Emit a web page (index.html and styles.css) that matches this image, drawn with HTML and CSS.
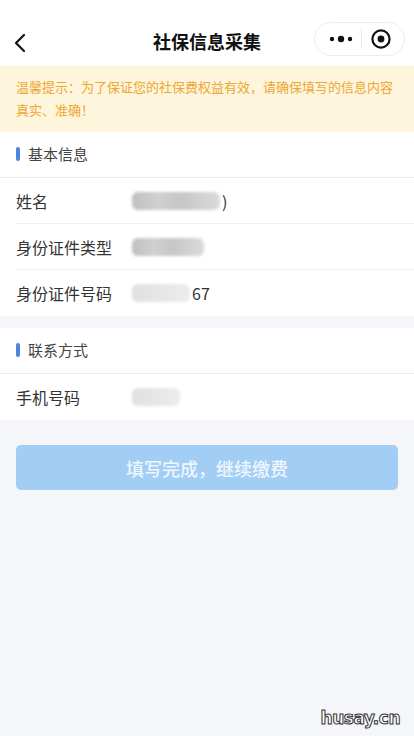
FILE: index.html
```html
<!DOCTYPE html>
<html>
<head>
  <meta charset="utf-8">
  <title>社保信息采集</title>
  <link rel="stylesheet" href="styles.css">
</head>
<body>
  <div class="page">
    <div class="nav">
      <svg class="back" width="12" height="20" viewBox="0 0 12 20"><path d="M10 2 L2 10 L10 18" fill="none" stroke="#111" stroke-width="2.2" stroke-linecap="round" stroke-linejoin="round"/></svg>
      <div class="title">社保信息采集</div>
      <div class="capsule">
        <svg width="24" height="8" viewBox="0 0 24 8"><circle cx="3" cy="4" r="2.2" fill="#111"/><circle cx="12" cy="4" r="3.2" fill="#111"/><circle cx="21" cy="4" r="2.2" fill="#111"/></svg>
        <span class="cap-line"></span>
        <svg width="22" height="22" viewBox="0 0 22 22"><circle cx="11" cy="11" r="8.6" fill="none" stroke="#111" stroke-width="2.2"/><circle cx="11" cy="11" r="3.4" fill="#111"/></svg>
      </div>
    </div>

    <div class="notice">温馨提示：为了保证您的社保费权益有效，请确保填写的信息内容真实、准确！</div>

    <div class="section">
      <div class="sec-head"><span class="bar"></span>基本信息</div>
      <div class="row">
        <span class="label">姓名</span>
        <span class="value"><span class="mask w88"></span>)</span>
      </div>
      <div class="row">
        <span class="label">身份证件类型</span>
        <span class="value"><span class="mask w72"></span></span>
      </div>
      <div class="row">
        <span class="label">身份证件号码</span>
        <span class="value"><span class="mask w58 light"></span>67</span>
      </div>
    </div>

    <div class="section">
      <div class="sec-head"><span class="bar"></span>联系方式</div>
      <div class="row">
        <span class="label">手机号码</span>
        <span class="value"><span class="mask w48 light"></span></span>
      </div>
    </div>

    <div class="actions">
      <button class="btn">填写完成，继续缴费</button>
    </div>

    <div class="mark">husay.cn</div>
  </div>
</body>
</html>
```

FILE: styles.css
```css
*{margin: 0;padding: 0;box-sizing: border-box;}
html, body{
  height: 100%;
  width: 100%;
  background-color: #f4f6f9;
  font-family: "Noto Sans CJK SC", "Noto Sans", sans-serif;
  color: #333;
}
.page{
  position: relative;
  min-height: 100%;
}
.nav{
  height: 66px;
  padding-top: 20px;
  background-color: #fff;
  display: flex;
  align-items: center;
  position: relative;
}
.back{
  margin-left: 14px;
}
.title{
  position: absolute;
  left: 0;
  right: 0;
  top: 20px;
  height: 46px;
  line-height: 42px;
  text-align: center;
  font-size: 18px;
  font-weight: 700;
  color: #111;
  pointer-events: none;
}
.capsule{
  margin-left: auto;
  margin-right: 9px;
  margin-top: -8px;
  width: 91px;
  height: 34px;
  border: 1px solid #eeeeee;
  border-radius: 17px;
  display: flex;
  align-items: center;
  justify-content: space-around;
  padding: 0 8px 0 10px;
}
.cap-line{
  width: 1px;
  height: 20px;
  background-color: #e8e8e8;
}
.notice{
  background-color: #fdf5dc;
  color: #eda733;
  font-size: 13px;
  line-height: 23px;
  padding: 9px 16px 11px;
}
.section{
  background-color: #fff;
  margin-bottom: 12px;
}
.sec-head{
  height: 46px;
  display: flex;
  align-items: center;
  font-size: 15px;
  color: #444;
  padding-left: 16px;
  padding-bottom: 2px;
  border-bottom: 1px solid #ebebeb;
}
.bar{
  width: 4px;
  height: 14px;
  border-radius: 2px;
  background-color: #4b86dc;
  margin-right: 8px;
}
.row{
  height: 46px;
  margin-left: 16px;
  display: flex;
  align-items: center;
  font-size: 16px;
  border-bottom: 1px solid #f0f0f0;
}
.row:last-child{
  border-bottom: none;
}
.label{
  width: 116px;
  color: #333;
}
.value{
  display: flex;
  align-items: center;
  color: #333;
}
.mask{
  display: inline-block;
  height: 18px;
  border-radius: 6px;
  background: linear-gradient(90deg, #bfbfbf, #d0d0d0 30%, #c6c6c6 55%, #dadada);
  filter: blur(1.5px);
  margin-right: 2px;
}
.mask.light{
  background: linear-gradient(90deg, #e0e0e0, #e6e6e6 50%, #ececec);
}
.w88{width: 88px;}
.w72{width: 72px;}
.w58{width: 58px;}
.w48{width: 48px;}
.actions{
  padding: 13px 16px;
}
.btn{
  width: 100%;
  height: 45px;
  border: none;
  border-radius: 5px;
  background-color: #a2cef5;
  color: #eef6fe;
  font-family: inherit;
  font-size: 18px;
  font-weight: 500;
}
.mark{
  position: absolute;
  right: 14px;
  bottom: 8px;
  font-family: "DejaVu Sans", sans-serif;
  font-weight: 700;
  font-size: 17px;
  color: #fff;
  -webkit-text-stroke: 1px #333;
  letter-spacing: -0.5px;
}
```
